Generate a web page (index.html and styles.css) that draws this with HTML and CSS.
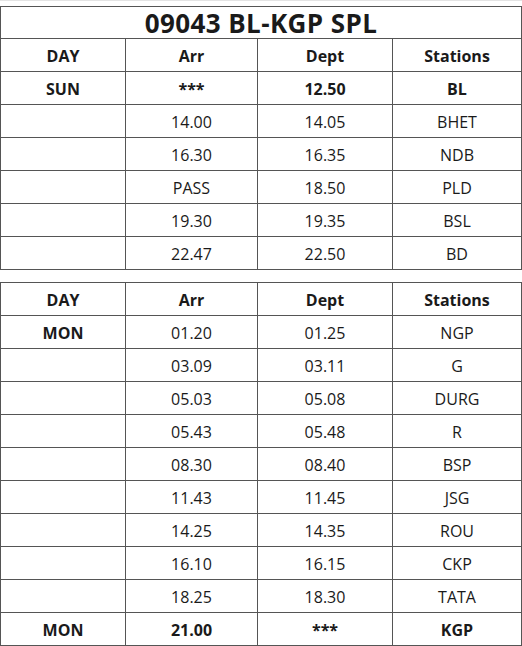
FILE: index.html
```html
<!DOCTYPE html>
<html>
<head>
<meta charset="utf-8">
<link rel="stylesheet" href="styles.css">
</head>
<body>
<div class="topline"></div>
<table class="sched">
  <colgroup><col class="c1"><col class="c2"><col class="c3"><col class="c4"></colgroup>
  <tr class="title"><td colspan="4">09043 BL-KGP SPL</td></tr>
  <tr class="bold"><td>DAY</td><td>Arr</td><td>Dept</td><td>Stations</td></tr>
  <tr class="bold"><td>SUN</td><td>***</td><td>12.50</td><td>BL</td></tr>
  <tr><td></td><td>14.00</td><td>14.05</td><td>BHET</td></tr>
  <tr><td></td><td>16.30</td><td>16.35</td><td>NDB</td></tr>
  <tr><td></td><td>PASS</td><td>18.50</td><td>PLD</td></tr>
  <tr><td></td><td>19.30</td><td>19.35</td><td>BSL</td></tr>
  <tr><td></td><td>22.47</td><td>22.50</td><td>BD</td></tr>
</table>
<table class="sched second">
  <colgroup><col class="c1"><col class="c2"><col class="c3"><col class="c4"></colgroup>
  <tr class="bold"><td>DAY</td><td>Arr</td><td>Dept</td><td>Stations</td></tr>
  <tr><td class="b">MON</td><td>01.20</td><td>01.25</td><td>NGP</td></tr>
  <tr><td></td><td>03.09</td><td>03.11</td><td>G</td></tr>
  <tr><td></td><td>05.03</td><td>05.08</td><td>DURG</td></tr>
  <tr><td></td><td>05.43</td><td>05.48</td><td>R</td></tr>
  <tr><td></td><td>08.30</td><td>08.40</td><td>BSP</td></tr>
  <tr><td></td><td>11.43</td><td>11.45</td><td>JSG</td></tr>
  <tr><td></td><td>14.25</td><td>14.35</td><td>ROU</td></tr>
  <tr><td></td><td>16.10</td><td>16.15</td><td>CKP</td></tr>
  <tr><td></td><td>18.25</td><td>18.30</td><td>TATA</td></tr>
  <tr class="bold"><td>MON</td><td>21.00</td><td>***</td><td>KGP</td></tr>
</table>
</body>
</html>
```
FILE: styles.css
```css
html, body {
  margin: 0;
  padding: 0;
  background: #fff;
}
body {
  font-family: "Open Sans", "Noto Sans", sans-serif;
  color: #1a1a1a;
}
.topline {
  height: 1px;
  background: #e4e4e4;
  margin-bottom: 5px;
}
.sched {
  border-collapse: collapse;
  table-layout: fixed;
  width: 521px;
}
.second {
  margin-top: 12px;
}
.c1 { width: 125px; }
.c2 { width: 132px; }
.c3 { width: 135px; }
.c4 { width: 129px; }
.sched td {
  border: 1px solid #555;
  padding: 2px 0 0;
  text-align: center;
  vertical-align: middle;
  font-size: 16px;
  line-height: 20px;
  box-sizing: border-box;
  height: 33px;
}
.sched .title td {
  height: 32px;
  padding: 0;
  font-size: 26px;
  font-weight: 700;
  line-height: 28px;
  letter-spacing: 0.4px;
}
.bold td, td.b {
  font-weight: 700;
}
```
